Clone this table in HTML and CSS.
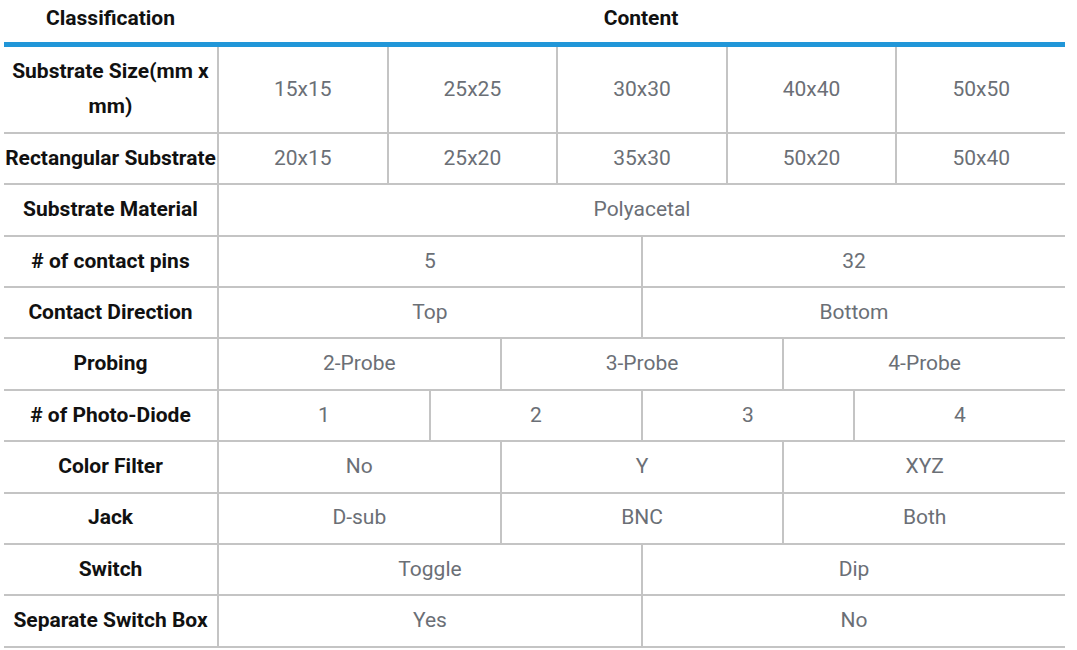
FILE: index.html
```html
<!DOCTYPE html>
<html>
<head>
<meta charset="utf-8">
<link rel="stylesheet" href="styles.css">
</head>
<body>
<div class="spec">
  <div class="row head">
    <div class="label">Classification</div>
    <div class="cells"><div class="cell">Content</div></div>
  </div>
  <div class="row">
    <div class="label">Substrate Size(mm x mm)</div>
    <div class="cells c5"><div class="cell">15x15</div><div class="cell">25x25</div><div class="cell">30x30</div><div class="cell">40x40</div><div class="cell">50x50</div></div>
  </div>
  <div class="row">
    <div class="label">Rectangular Substrate</div>
    <div class="cells c5"><div class="cell">20x15</div><div class="cell">25x20</div><div class="cell">35x30</div><div class="cell">50x20</div><div class="cell">50x40</div></div>
  </div>
  <div class="row">
    <div class="label">Substrate Material</div>
    <div class="cells c1"><div class="cell">Polyacetal</div></div>
  </div>
  <div class="row">
    <div class="label"># of contact pins</div>
    <div class="cells c2"><div class="cell">5</div><div class="cell">32</div></div>
  </div>
  <div class="row">
    <div class="label">Contact Direction</div>
    <div class="cells c2"><div class="cell">Top</div><div class="cell">Bottom</div></div>
  </div>
  <div class="row">
    <div class="label">Probing</div>
    <div class="cells c3"><div class="cell">2-Probe</div><div class="cell">3-Probe</div><div class="cell">4-Probe</div></div>
  </div>
  <div class="row">
    <div class="label"># of Photo-Diode</div>
    <div class="cells c4"><div class="cell">1</div><div class="cell">2</div><div class="cell">3</div><div class="cell">4</div></div>
  </div>
  <div class="row">
    <div class="label">Color Filter</div>
    <div class="cells c3"><div class="cell">No</div><div class="cell">Y</div><div class="cell">XYZ</div></div>
  </div>
  <div class="row">
    <div class="label">Jack</div>
    <div class="cells c3"><div class="cell">D-sub</div><div class="cell">BNC</div><div class="cell">Both</div></div>
  </div>
  <div class="row">
    <div class="label">Switch</div>
    <div class="cells c2"><div class="cell">Toggle</div><div class="cell">Dip</div></div>
  </div>
  <div class="row">
    <div class="label">Separate Switch Box</div>
    <div class="cells c2"><div class="cell">Yes</div><div class="cell">No</div></div>
  </div>
</div>
</body>
</html>
```

FILE: styles.css
```css
html, body {
  margin: 0;
  padding: 0;
  background: #ffffff;
}
body {
  font-family: Roboto, "Liberation Sans", Arial, sans-serif;
  font-size: 21px;
  line-height: 35.6px;
}
.spec {
  margin-left: 4px;
  width: 1061px;
}
.row {
  display: flex;
  border-bottom: 2px solid #c4c4c4;
}
.row.head {
  border-bottom: 5px solid #2196d8;
}
.label {
  width: 213px;
  flex: none;
  box-sizing: border-box;
  padding: 6.9px 0;
  text-align: center;
  font-weight: 700;
  color: #111111;
}
.head .label {
  padding: 0.6px 0 5.8px;
}
.cells {
  flex: 1;
  display: grid;
  grid-template-columns: 1fr;
}
.cells.c2 { grid-template-columns: repeat(2, 1fr); }
.cells.c3 { grid-template-columns: repeat(3, 1fr); }
.cells.c4 { grid-template-columns: repeat(4, 1fr); }
.cells.c5 { grid-template-columns: repeat(5, 1fr); }
.cell {
  border-left: 2px solid #c4c4c4;
  display: flex;
  align-items: center;
  justify-content: center;
  color: #6b6f76;
  padding: 6.9px 0;
}
.head .cell {
  border-left: none;
  color: #111111;
  font-weight: 700;
  padding: 0.6px 0 5.8px;
}
```
